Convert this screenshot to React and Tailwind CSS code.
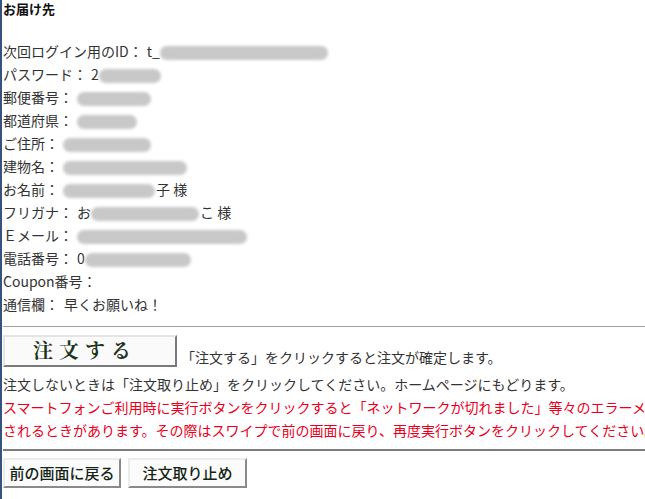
const fields = [
    { label: "次回ログイン用のID：", pre: "t_", blur: 168 },
    { label: "パスワード：", pre: "2", blur: 62 },
    { label: "郵便番号：", pre: "", blur: 74 },
    { label: "都道府県：", pre: "", blur: 60 },
    { label: "ご住所：", pre: "", blur: 88 },
    { label: "建物名：", pre: "", blur: 124 },
    { label: "お名前：", pre: "", blur: 92, post: "子 様" },
    { label: "フリガナ：", pre: "お", blur: 108, post: "こ 様" },
    { label: "Ｅメール：", pre: "", blur: 170 },
    { label: "電話番号：", pre: "0", blur: 106 },
    { label: "Coupon番号：", pre: "", blur: 0 },
    { label: "通信欄：", pre: "", blur: 0, post: "早くお願いね！" },
];

const Blur = ({ w }) => (
    <span className="inline-block align-middle h-[14px] rounded-full bg-[#c8c8c8] blur-[1.5px]" style={{ width: w }} />
);

const App = () => {
    return (
        <div className="w-full h-[499px] overflow-hidden bg-white border-l-2 border-[#36527e]">
            <div className="w-[760px] pl-[1px] text-[14px] text-[#222] font-['Noto_Sans_CJK_JP','Noto_Sans',sans-serif]">
                <h3 className="text-[13px] font-bold leading-[18px] text-[#111]">お届け先</h3>
                <div className="mt-[22px]">
                    {fields.map((f) => (
                        <div key={f.label} className="h-[23px] leading-[23px] whitespace-nowrap text-[#333]">
                            <span>{f.label}</span>
                            <span className="ml-[4px]">{f.pre}</span>
                            {f.blur > 0 && <Blur w={f.blur} />}
                            {f.post && <span className="ml-[1px]">{f.post}</span>}
                        </div>
                    ))}
                </div>
                <hr className="mt-[10px] w-[645px] border-t border-[#9aa0a8]" />
                <div className="mt-[8px] flex items-end whitespace-nowrap">
                    <button className="w-[174px] h-[32px] pl-[28px] text-left bg-[#fafafa] border-2 border-t-[#e4e4e4] border-l-[#e4e4e4] border-b-[#7a7a7a] border-r-[#7a7a7a] font-['Liberation_Serif','Noto_Serif_CJK_JP','Noto_Sans_CJK_JP',serif] font-bold text-[20px] leading-[26px] tracking-[6px] text-[#1a331a]">
                        注文する
                    </button>
                    <span className="ml-[4px] leading-[20px] text-[#333]">「注文する」をクリックすると注文が確定します。</span>
                </div>
                <div className="mt-[6px] leading-[23px] whitespace-nowrap text-[#333]">注文しないときは「注文取り止め」をクリックしてください。ホームページにもどります。</div>
                <div className="leading-[23px] whitespace-nowrap text-[#e8001c]">スマートフォンご利用時に実行ボタンをクリックすると「ネットワークが切れました」等々のエラーメッセージが表示</div>
                <div className="leading-[23px] whitespace-nowrap text-[#e8001c]">されるときがあります。その際はスワイプで前の画面に戻り、再度実行ボタンをクリックしてください。</div>
                <hr className="mt-[7px] w-[645px] border-t-2 border-[#7d7d7d]" />
                <div className="mt-[7px] flex gap-[7px]">
                    <button className="w-[118px] h-[30px] bg-[#fbfbfb] border-2 border-t-[#ececec] border-l-[#ececec] border-b-[#8a8a8a] border-r-[#8a8a8a] text-[15px] font-medium text-[#142414]">前の画面に戻る</button>
                    <button className="w-[119px] h-[30px] bg-[#fbfbfb] border-2 border-t-[#ececec] border-l-[#ececec] border-b-[#8a8a8a] border-r-[#8a8a8a] text-[15px] font-medium text-[#142414]">注文取り止め</button>
                </div>
            </div>
        </div>
    );
};

export default App;
